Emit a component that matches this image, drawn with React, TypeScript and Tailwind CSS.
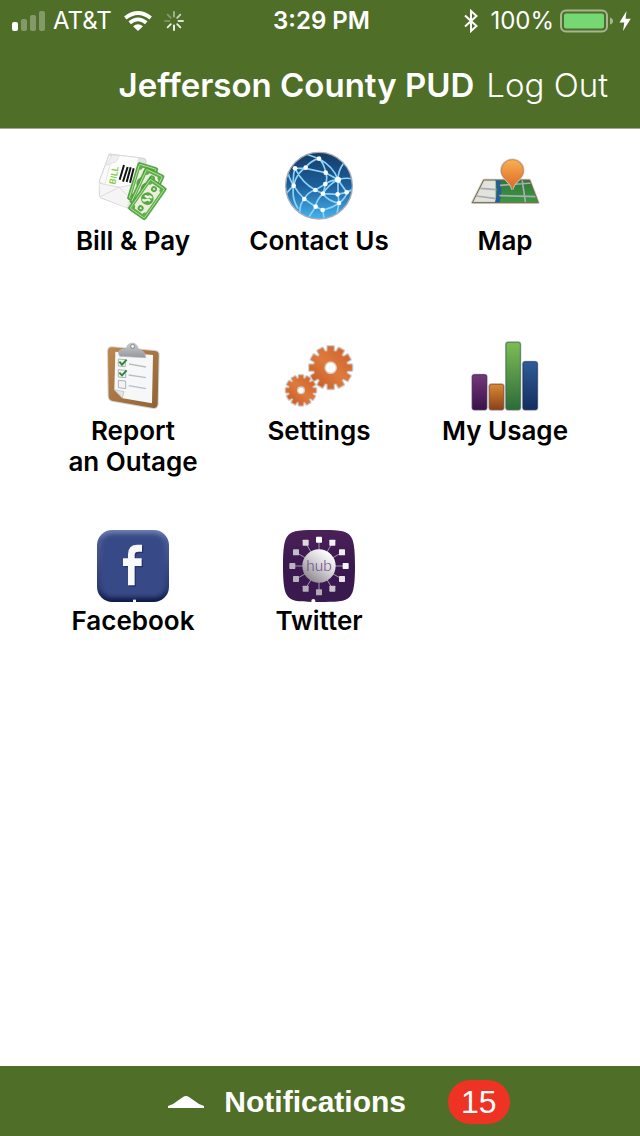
import React from 'react';

const gearPath = (cx: number, cy: number, outer: number, inner: number, teeth: number) => {
  const step = (Math.PI * 2) / teeth;
  const points: string[] = [];
  for (let i = 0; i < teeth; i++) {
    const mid = i * step - Math.PI / 2;
    const corners = [
      [inner, -0.34],
      [outer, -0.25],
      [outer, 0.25],
      [inner, 0.34],
    ];
    corners.forEach(([r, t]) => {
      const a = mid + t * step;
      points.push(`${(cx + r * Math.cos(a)).toFixed(1)} ${(cy + r * Math.sin(a)).toFixed(1)}`);
    });
  }
  return `M${points.join('L')}Z`;
};

const Bill = ({ x, y, angle }: { x: number; y: number; angle: number }) => (
  <g transform={`translate(${x} ${y}) rotate(${angle})`}>
    <rect x="-31" y="-58" width="62" height="116" rx="5" fill="#53a840" stroke="#469a36" strokeWidth="2" />
    <rect x="-26" y="-53" width="52" height="106" rx="3" fill="#5cb046" stroke="#dcefc8" strokeWidth="2" />
    <path d="M-14 -46H14Q15 -38 21 -37V37Q15 38 14 46H-14Q-15 38 -21 37V-37Q-15 -38 -14 -46Z" fill="#eceedd" />
    <circle r="19" fill="#55a843" />
    <path d="M-10 8Q-4 14 0 5Q3 -2 11 2M-11 -4Q-4 -1 0 -7Q4 -13 10 -8" fill="none" stroke="#f0f4e4" strokeWidth="7" />
    <circle cy="-35" r="9" fill="#55a843" />
    <circle cy="35" r="9" fill="#55a843" />
    <path d="M-3 -35H3M-3 35H3" stroke="#eef4df" strokeWidth="5" />
  </g>
);

const BillPayIcon = () => (
  <svg viewBox="15 15 216 216" className="h-[72px] w-[72px]" aria-hidden="true">
    <path d="M52 27L155 40Q164 42 162 52L133 184Q130 193 110 190L30 160Q21 157 22 147L22 108Z" fill="#e4e4e4" stroke="#cfcfd1" strokeWidth="3" />
    <path d="M52 29L22 110L52 128L58 36Z" fill="#fafafa" stroke="#dadadc" strokeWidth="2" />
    <path d="M62 29L140 38L124 132L38 122Z" fill="#fdfdfd" stroke="#d9d9dc" strokeWidth="2" />
    <path d="M60 30L43 61L72 50L83 32Z" fill="#f0f0f0" stroke="#d9d9dc" strokeWidth="2" />
    <path d="M22 114L84 126L126 118L104 188L24 156Z" fill="#f5f5f5" />
    <path d="M24 115L82 127L125 118M82 127L25 155M82 127L104 150" fill="none" stroke="#cfcfd1" strokeWidth="2" />
    <text x="70" y="119" transform="rotate(-79 70 119)" fontFamily="Roboto, sans-serif" fontSize="27" fill="#83ce45">BILL</text>
    <path d="M83 104L96 60M93 110L107 66M104 111L116 67M114 113L125 70" stroke="#151515" strokeWidth="6" />
    <Bill x={152} y={116} angle={17} />
    <Bill x={165} y={132} angle={25} />
    <Bill x={166} y={161} angle={35} />
  </svg>
);

const globeNodes = [
  [126, 41], [86, 68], [54, 70], [146, 83], [183, 104], [50, 122], [145, 117], [115, 135],
  [138, 146], [82, 162], [182, 148], [209, 142], [186, 174], [116, 185], [137, 195],
];

const ContactIcon = () => (
  <svg viewBox="18 15 216 216" className="h-[72px] w-[72px]" aria-hidden="true">
    <defs>
      <linearGradient id="globe" x1="0" y1="0" x2="0" y2="1">
        <stop offset="0" stopColor="#163b65" />
        <stop offset="0.5" stopColor="#1d5f9c" />
        <stop offset="1" stopColor="#45b3ee" />
      </linearGradient>
      <clipPath id="globeClip">
        <circle cx="126" cy="122" r="98" />
      </clipPath>
    </defs>
    <circle cx="126" cy="122" r="100" fill="url(#globe)" stroke="#a7adb4" strokeWidth="4" />
    <g clipPath="url(#globeClip)">
      <path
        d="M80 25Q104 33 126 41Q142 57 146 83Q153 98 145 117Q142 134 138 146Q117 167 116 185M126 41Q100 47 86 68Q58 83 50 122Q64 145 82 162L116 185L137 195Q164 190 186 174M54 70H86L146 83L183 104Q162 105 145 117L115 135Q91 142 82 162Q64 182 70 215M54 70Q46 97 50 122M54 70Q76 114 115 135L138 146L182 148L209 142L230 132M126 41Q170 65 183 104V148L186 174L180 205M183 104L209 142Q208 158 186 174M200 55Q183 77 183 104M50 122Q28 143 25 152M50 122Q43 160 63 191M50 122Q34 97 32 75M183 104Q153 119 138 146M138 146Q154 169 186 174M183 104Q212 96 228 103M116 185L93 220M137 195L142 224"
        fill="none"
        stroke="#8bd3f8"
        strokeWidth="5"
      />
      {globeNodes.map(([x, y]) => (
        <circle key={`${x}-${y}`} cx={x} cy={y} r={x === 183 ? 9 : 7} fill="#ffffff" />
      ))}
    </g>
  </svg>
);

const MapIcon = () => (
  <svg viewBox="18 15 216 216" className="h-[72px] w-[72px]" aria-hidden="true">
    <defs>
      <linearGradient id="pin" x1="0" y1="0" x2="0" y2="1">
        <stop offset="0" stopColor="#f9b052" />
        <stop offset="1" stopColor="#dd6424" />
      </linearGradient>
      <linearGradient id="land" x1="0" y1="0" x2="0" y2="1">
        <stop offset="0" stopColor="#2f7438" />
        <stop offset="1" stopColor="#3d9c43" />
      </linearGradient>
      <clipPath id="mapClip">
        <path d="M63 105H200L226 173H28Z" />
      </clipPath>
    </defs>
    <path d="M62 105H200L226 173H28Z" fill="#e4e2de" stroke="#d2d2d2" strokeWidth="8" strokeLinejoin="round" />
    <g clipPath="url(#mapClip)">
      <path d="M98 100H230V180H98Z" fill="url(#land)" />
      <path d="M103 100Q116 140 100 180" fill="none" stroke="#235c98" strokeWidth="13" />
      <path d="M52 130L100 134M40 153L99 161M111 121L208 114M109 152L224 155M177 102L188 176" stroke="#a9adb2" strokeWidth="5" />
    </g>
    <path d="M62 105H200L226 173H28Z" fill="none" stroke="#75683f" strokeWidth="3" strokeLinejoin="round" />
    <path d="M148 134C145 108 115 103 115 77A33 33 0 0 1 181 77C181 103 151 108 148 134Z" fill="none" stroke="#c4c4c6" strokeWidth="7" />
    <path d="M148 134C145 108 115 103 115 77A33 33 0 0 1 181 77C181 103 151 108 148 134Z" fill="url(#pin)" stroke="#c9762f" strokeWidth="2" />
  </svg>
);

const OutageIcon = () => (
  <svg viewBox="15 15 216 216" className="h-[72px] w-[72px]" aria-hidden="true">
    <defs>
      <linearGradient id="board" x1="0" y1="0" x2="1" y2="1">
        <stop offset="0" stopColor="#bd8850" />
        <stop offset="1" stopColor="#8f6236" />
      </linearGradient>
      <linearGradient id="clip" x1="0" y1="0" x2="0" y2="1">
        <stop offset="0" stopColor="#c9cbce" />
        <stop offset="1" stopColor="#94979b" />
      </linearGradient>
    </defs>
    <path d="M61 37L189 48Q201 49 200 61L197 207Q196 220 184 219L60 197Q50 194 50 182L48 49Q48 36 61 37Z" fill="none" stroke="#d6d4d2" strokeWidth="6" />
    <path d="M61 37L189 48Q201 49 200 61L197 207Q196 220 184 219L60 197Q50 194 50 182L48 49Q48 36 61 37Z" fill="url(#board)" />
    <path d="M70 50L183 60L180 205L92 190L67 164Z" fill="#f6f7f8" />
    <path d="M67 164L96 170L91 189Z" fill="#e3e5e7" stroke="#b7babd" strokeWidth="2" />
    <path d="M83 64L79 53Q80 44 92 42L104 39Q105 25 122 24Q136 26 139 42L151 47Q160 52 161 68Z" fill="url(#clip)" stroke="#b4b7ba" strokeWidth="2" />
    <circle cx="122" cy="34" r="6" fill="#f4f4f4" stroke="#83868a" strokeWidth="3" />
    <path d="M79 72L100 74V95L79 93ZM79 104L101 106V128L79 126ZM79 136L101 138V161L79 158Z" fill="#f1f3f5" stroke="#afb3b8" strokeWidth="3" />
    <path d="M82 80L90 89L104 74M82 113L90 121L104 106" fill="none" stroke="#2f8a35" strokeWidth="6" />
    <path d="M111 87L162 96M110 120L162 128M110 152L162 161" stroke="#bbbec1" strokeWidth="4" />
  </svg>
);

const SettingsIcon = () => (
  <svg viewBox="18 15 216 216" className="h-[72px] w-[72px]" aria-hidden="true">
    <defs>
      <linearGradient id="gear" x1="1" y1="0" x2="0" y2="1">
        <stop offset="0" stopColor="#c95e2b" />
        <stop offset="0.5" stopColor="#e07a3c" />
        <stop offset="1" stopColor="#bd5727" />
      </linearGradient>
    </defs>
    <g strokeLinejoin="round">
      <path d={gearPath(161, 98, 64, 50, 12)} fill="none" stroke="#cfcfd1" strokeWidth="9" />
      <path d={gearPath(72, 166, 45, 36, 12)} fill="none" stroke="#cfcfd1" strokeWidth="9" />
      <path d={gearPath(161, 98, 64, 50, 12)} fill="url(#gear)" stroke="#d9773c" strokeWidth="2" />
      <path d={gearPath(72, 166, 45, 36, 12)} fill="url(#gear)" stroke="#d9773c" strokeWidth="2" />
    </g>
    <circle cx="161" cy="98" r="17" fill="#ffffff" stroke="#d6cdc8" strokeWidth="4" />
    <circle cx="72" cy="166" r="10" fill="#ffffff" stroke="#d6cdc8" strokeWidth="4" />
  </svg>
);

const usageBars = [
  { x: 28, y: 119, from: '#743879', to: '#3a1149' },
  { x: 79, y: 148, from: '#d98934', to: '#8a411c' },
  { x: 129, y: 22, from: '#7fbc56', to: '#2b6b3a' },
  { x: 180, y: 80, from: '#2e5c96', to: '#152d5f' },
];

const UsageIcon = () => (
  <svg viewBox="18 15 216 216" className="h-[72px] w-[72px]" aria-hidden="true">
    {usageBars.map((bar, i) => (
      <g key={bar.x}>
        <linearGradient id={`bar${i}`} x1="0" y1="0" x2="0" y2="1">
          <stop offset="0" stopColor={bar.from} />
          <stop offset="1" stopColor={bar.to} />
        </linearGradient>
        <rect x={bar.x - 3} y={bar.y - 3} width="49" height={230 - bar.y} rx="9" fill="#bcbdbf" />
        <rect x={bar.x} y={bar.y} width="43" height={224 - bar.y} rx="6" fill={`url(#bar${i})`} stroke={bar.to} strokeWidth="2" />
      </g>
    ))}
  </svg>
);

const FacebookIcon = () => (
  <svg viewBox="15 21 216 216" className="h-[72px] w-[72px]" aria-hidden="true">
    <defs>
      <linearGradient id="fbEdge" x1="0" y1="0" x2="0" y2="1">
        <stop offset="0" stopColor="#6f80ae" />
        <stop offset="0.15" stopColor="#4c5e96" />
        <stop offset="0.8" stopColor="#2b3a74" />
        <stop offset="1" stopColor="#0f1944" />
      </linearGradient>
      <filter id="fbSoft" x="-10%" y="-10%" width="120%" height="120%">
        <feGaussianBlur stdDeviation="6" />
      </filter>
    </defs>
    <rect x="15" y="21" width="216" height="216" rx="46" fill="url(#fbEdge)" />
    <rect x="27" y="34" width="192" height="188" rx="34" fill="#384a87" filter="url(#fbSoft)" />
    <path d="M112 191V133H97V110H112V98Q112 69 140 69H154V90H143Q132 90 132 100V110H153V133H132V191Z" fill="#26346a" />
    <path d="M108 187V129H93V106H108V94Q108 65 136 65H150V86H139Q128 86 128 96V106H149V129H128V187Z" fill="#f8f9fb" />
    <rect x="123" y="230" width="9" height="7" fill="#ffffff" />
  </svg>
);

const hubNodes = [
  [126, 50, '#ffffff'], [166, 59, '#f4f2f5'], [195, 88, '#eeecef'], [206, 129, '#f7f6f8'],
  [195, 168, '#e6e3e8'], [166, 197, '#c9c3cd'], [126, 208, '#b1a9b6'], [86, 197, '#b5adba'],
  [57, 168, '#b9b2be'], [46, 129, '#bcb5c0'], [57, 88, '#c4becb'], [86, 59, '#dcd8df'],
] as const;

const HubIcon = () => (
  <svg viewBox="18 21 216 216" className="h-[72px] w-[72px]" aria-hidden="true">
    <defs>
      <linearGradient id="hubBg" x1="0" y1="0" x2="0" y2="1">
        <stop offset="0" stopColor="#4a2157" />
        <stop offset="0.5" stopColor="#3a1850" />
        <stop offset="1" stopColor="#391a4e" />
      </linearGradient>
      <linearGradient id="hubBall" x1="0.8" y1="0.1" x2="0.2" y2="0.9">
        <stop offset="0" stopColor="#ffffff" />
        <stop offset="0.5" stopColor="#cfcdd1" />
        <stop offset="1" stopColor="#8f8b92" />
      </linearGradient>
    </defs>
    <path d="M126 21C176 21 206 22 218 36C231 49 234 79 234 129S231 209 218 222C206 236 176 237 126 237S46 236 34 222C21 209 18 179 18 129S21 49 34 36C46 22 76 21 126 21Z" fill="url(#hubBg)" />
    {hubNodes.map(([x, y, fill]) => (
      <g key={`${x}-${y}`}>
        <path d={`M126 129L${x} ${y}`} stroke="#a593ad" strokeWidth="3" />
        <rect x={x - 9} y={y - 9} width="18" height="18" rx="2" fill={fill} />
      </g>
    ))}
    <circle cx="126" cy="129" r="50" fill="url(#hubBall)" />
    <text x="126" y="143" textAnchor="middle" fontFamily="Lato, sans-serif" fontWeight="300" fontSize="46" fill="#5d3475">hub</text>
    <circle cx="109" cy="234" r="6" fill="#ffffff" />
  </svg>
);

const menuItems: { label: string[]; icon: React.FC }[] = [
  { label: ['Bill & Pay'], icon: BillPayIcon },
  { label: ['Contact Us'], icon: ContactIcon },
  { label: ['Map'], icon: MapIcon },
  { label: ['Report', 'an Outage'], icon: OutageIcon },
  { label: ['Settings'], icon: SettingsIcon },
  { label: ['My Usage'], icon: UsageIcon },
  { label: ['Facebook'], icon: FacebookIcon },
  { label: ['Twitter'], icon: HubIcon },
];

// opacity of each spinner spoke, clockwise from the top
const spokes = [0.5, 0.7, 0.8, 0.9, 1, 0.9, 0.25, 0.3];

const StatusBar = () => (
  <div className="grid h-[42px] grid-cols-3 items-center pr-[9px] pl-3 text-2xl">
    <div className="flex items-center">
      <svg viewBox="0 0 33 20" className="h-5 w-[33px]" fill="#ffffff" aria-hidden="true">
        <rect x="0" y="11" width="6" height="9" rx="2" />
        <rect x="9" y="8" width="6" height="12" rx="2" opacity="0.3" />
        <rect x="18" y="4" width="6" height="16" rx="2" opacity="0.3" />
        <rect x="27" y="0" width="6" height="20" rx="2" opacity="0.3" />
      </svg>
      <span className="ml-2">AT&amp;T</span>
      <svg viewBox="0 0 28 20" className="ml-3 h-5 w-7" fill="none" stroke="#ffffff" strokeWidth="3.8" aria-hidden="true">
        <path d="M1.3 7Q14 -3 26.7 7" />
        <path d="M5.7 11.8Q14 5 22.3 11.8" />
        <path d="M14 20L9 15.2Q14 11.4 19 15.2Z" fill="#ffffff" stroke="none" />
      </svg>
      <svg viewBox="-10 -10 20 20" className="ml-3 h-5 w-5" aria-hidden="true">
        {spokes.map((opacity, i) => (
          <path key={i} d="M0 -4.5V-9" transform={`rotate(${i * 45})`} stroke="#ffffff" strokeWidth="1.8" strokeLinecap="round" opacity={opacity} />
        ))}
      </svg>
    </div>
    <div className="text-center font-semibold">3:29 PM</div>
    <div className="flex items-center justify-end">
      <svg viewBox="0 0 14 24" className="h-6 w-[14px]" fill="none" stroke="#ffffff" strokeWidth="2" aria-hidden="true">
        <path d="M1 6.5L12.5 17L7 22V2L12.5 7L1 17.5" />
      </svg>
      <span className="ml-3">100%</span>
      <svg viewBox="0 0 53 24" className="ml-[6px] h-6 w-[53px]" aria-hidden="true">
        <rect x="1" y="1.5" width="46" height="21" rx="5" fill="none" stroke="#ffffff" strokeWidth="2" opacity="0.5" />
        <rect x="4" y="4.5" width="40" height="15" rx="2" fill="#76d873" />
        <path d="M50 8.5Q53 9.5 53 12T50 15.5Z" fill="#ffffff" opacity="0.5" />
      </svg>
      <svg viewBox="0 0 12 20" className="ml-[6px] h-5 w-3" fill="#ffffff" aria-hidden="true">
        <path d="M7.5 0L0.5 11.5H5.3L4 20L11.8 7.8H6.6Z" />
      </svg>
    </div>
  </div>
);

const App: React.FC = () => {
  return (
    <div className="flex min-h-screen flex-col bg-white font-['Inter',sans-serif] text-black">
      <header className="border-b border-[#a3a3a3] bg-[#4f6e28] text-white">
        <StatusBar />
        <div className="flex h-[86px] items-center justify-end gap-3 pr-8 text-[33px] leading-10">
          <h1 className="font-semibold">Jefferson County PUD</h1>
          <button type="button" className="font-light">Log Out</button>
        </div>
      </header>

      <main className="flex-1 pt-[21px] pr-[42px] pl-10">
        <nav className="grid auto-rows-[190px] grid-cols-3" aria-label="Main menu">
          {menuItems.map(({ label, icon: Icon }) => (
            <a key={label[0]} href="#" className="flex flex-col items-center gap-[3px] text-center text-[26px] leading-[31px] font-semibold">
              <Icon />
              <span>
                {label.map(line => (
                  <span key={line} className="block">{line}</span>
                ))}
              </span>
            </a>
          ))}
        </nav>
      </main>

      <footer className="bg-[#4f6e28] text-white">
        <button type="button" className="flex h-[70px] w-full items-center justify-center pt-[2px] pl-[38px] font-['Liberation_Sans',sans-serif]">
          <svg viewBox="0 0 36 12" className="h-3 w-9" fill="#ffffff" aria-hidden="true">
            <path d="M0 12V10L5 8L15 1Q18 -1 21 1L31 8L36 10V12Z" />
          </svg>
          <span className="ml-5 text-3xl font-bold">Notifications</span>
          <span className="ml-[42px] flex h-11 items-center rounded-full bg-[#ee3324] px-[13px] text-[32px]">15</span>
        </button>
      </footer>
    </div>
  );
};

export default App;
